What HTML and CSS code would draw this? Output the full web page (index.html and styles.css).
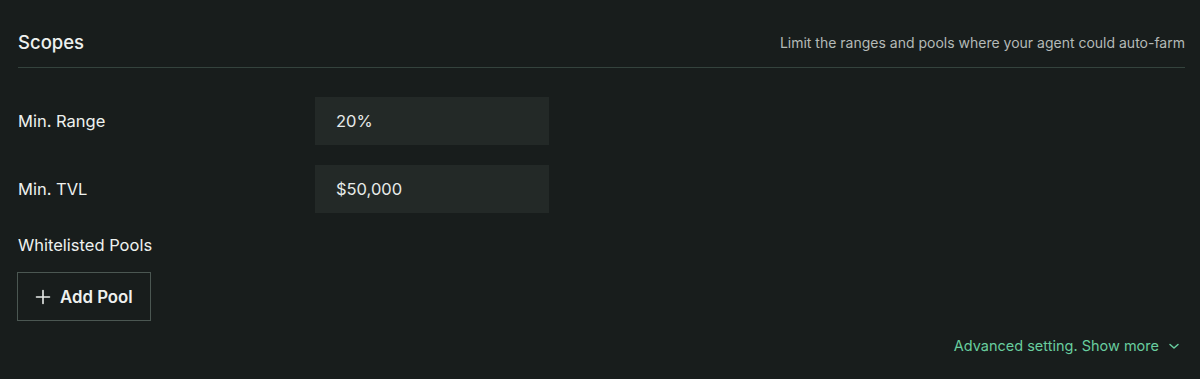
FILE: index.html
```html
<!DOCTYPE html>
<html>
<head>
<meta charset="utf-8">
<link rel="stylesheet" href="styles.css">
</head>
<body>
<section class="scopes">
  <header class="head">
    <h2 class="title">Scopes</h2>
    <p class="sub">Limit the ranges and pools where your agent could auto-farm</p>
  </header>
  <div class="rows">
    <div class="row">
      <span class="label">Min. Range</span>
      <div class="input">20%</div>
    </div>
    <div class="row">
      <span class="label">Min. TVL</span>
      <div class="input">$50,000</div>
    </div>
  </div>
  <div class="pools">
    <span class="label">Whitelisted Pools</span>
    <button class="add">
      <svg width="16" height="16" viewBox="0 0 16 16" fill="none"><path d="M8 1.5v13M1.5 8h13" stroke="#e8ece9" stroke-width="1.6" stroke-linecap="round"/></svg>
      <span>Add Pool</span>
    </button>
  </div>
  <div class="foot">
    <a class="more">Advanced setting. Show more
      <svg width="12" height="12" viewBox="0 0 12 12" fill="none"><path d="M2 4.5L6 8l4-3.5" stroke="#68cd9f" stroke-width="1.5" stroke-linecap="round" stroke-linejoin="round"/></svg>
    </a>
  </div>
</section>
</body>
</html>
```
FILE: styles.css
```css
html, body {
  margin: 0;
  background: #181d1c;
}
body {
  font-family: Inter, "Noto Sans", sans-serif;
  color: #eef1ef;
  height: 379px;
  overflow: hidden;
}
.scopes {
  padding: 23px 15px 0 18px;
}
.head {
  display: flex;
  justify-content: space-between;
  align-items: center;
  height: 38px;
  padding-bottom: 6px;
  border-bottom: 1px solid #34433d;
}
.title {
  margin: 0;
  font-size: 18.5px;
  font-weight: 500;
}
.sub {
  margin: 0;
  font-size: 14px;
  color: #b4bab7;
}
.rows {
  display: flex;
  flex-direction: column;
  gap: 20px;
  margin-top: 29px;
}
.row {
  display: flex;
  align-items: center;
}
.label {
  font-size: 16.5px;
  width: 297px;
  color: #eef1ef;
}
.input {
  width: 213px;
  height: 48px;
  padding-left: 21px;
  box-sizing: content-box;
  background: #232927;
  display: flex;
  align-items: center;
  font-size: 16.5px;
  color: #e7ebe9;
}
.pools {
  display: flex;
  flex-direction: column;
  align-items: flex-start;
  margin-top: 22px;
}
.add {
  margin-top: 17px;
  height: 49px;
  width: 134px;
  margin-left: -1px;
  display: flex;
  align-items: center;
  gap: 9px;
  padding: 0 0 0 17px;
  background: transparent;
  border: 1px solid #4b5752;
  color: #eef1ef;
  font-family: inherit;
  font-size: 16.8px;
  font-weight: 600;
}
.foot {
  display: flex;
  justify-content: flex-end;
  margin-top: 16px;
  padding-right: 5px;
}
.more {
  display: flex;
  align-items: center;
  gap: 9px;
  font-size: 14.5px;
  color: #68cd9f;
}
```
